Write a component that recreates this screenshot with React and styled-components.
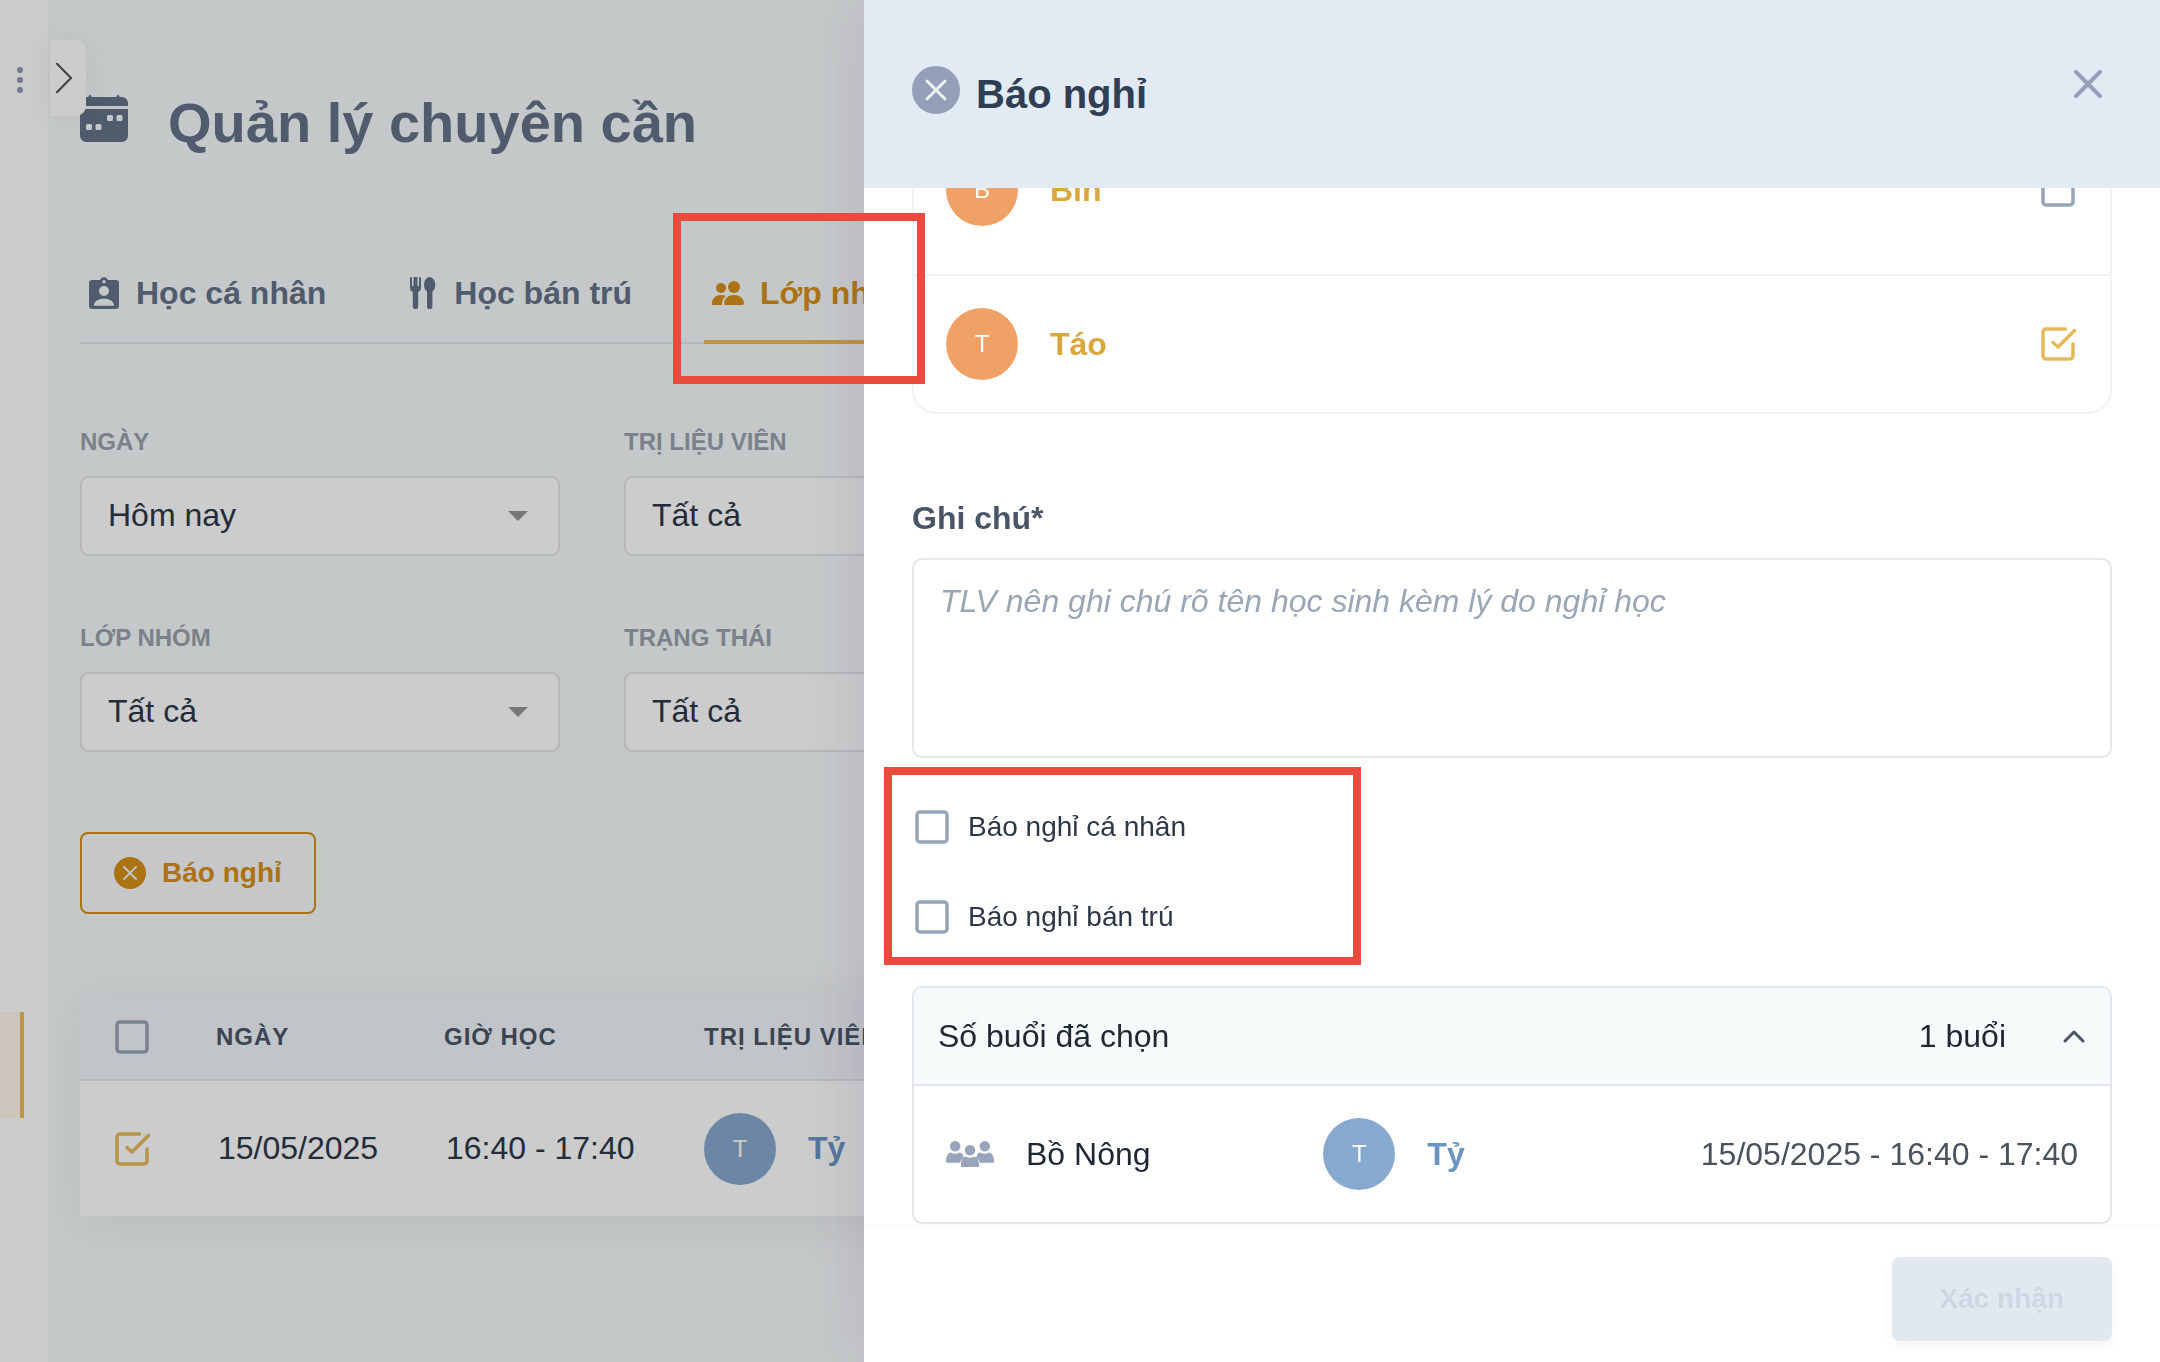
import React from "react";
import styled, { createGlobalStyle } from "styled-components";

const filters = [
  { id: "ngay", label: "NGÀY", value: "Hôm nay" },
  { id: "tri-lieu-vien", label: "TRỊ LIỆU VIÊN", value: "Tất cả" },
  { id: "lop-nhom", label: "LỚP NHÓM", value: "Tất cả" },
  { id: "trang-thai", label: "TRẠNG THÁI", value: "Tất cả" },
];

const students = [
  { name: "Bin", checked: false },
  { name: "Táo", checked: true },
];

function Checkbox({ checked, ...props }) {
  return (
    <CheckWrap>
      <input type="checkbox" defaultChecked={checked} {...props} />
      <svg viewBox="0 0 40 40" aria-hidden="true">
        <rect className="off" x="5" y="5" width="30" height="30" rx="3" />
        <g className="on">
          <path d="M27.5 5H8a3 3 0 0 0-3 3v24a3 3 0 0 0 3 3h24a3 3 0 0 0 3-3V20" />
          <path d="M15 18.5l5 4.5L36.5 6.5" />
        </g>
      </svg>
    </CheckWrap>
  );
}

function CrossCircle({ size }) {
  return (
    <svg width={size} height={size} viewBox="0 0 48 48" aria-hidden="true">
      <circle cx="24" cy="24" r="24" fill="currentColor" />
      <path
        d="M15 15l18 18M33 15L15 33"
        stroke="#edf2f7"
        strokeWidth="3"
        strokeLinecap="round"
      />
    </svg>
  );
}

function CalendarIcon() {
  return (
    <svg width="48" height="48" viewBox="0 0 48 48" aria-hidden="true">
      <path
        fill="currentColor"
        fillRule="evenodd"
        d="M10 0a1.5 1.5 0 0 1 1.500 1.500V2h25v-.5a1.500 1.500 0 0 1 3 0V2H42a6 6 0 0 1 6 6v3H0V8a6 6 0 0 1 6-6h2.500v-.5A1.500 1.500 0 0 1 10 0zM0 14h48v27a6 6 0 0 1-6 6H6a6 6 0 0 1-6-6zM28.500 20a1.500 1.500 0 0 0-1.500 1.500v3a1.500 1.500 0 0 0 1.500 1.500h3a1.500 1.500 0 0 0 1.500-1.500v-3a1.500 1.500 0 0 0-1.500-1.500zM38 20a1.500 1.500 0 0 0-1.500 1.500v3a1.500 1.500 0 0 0 1.500 1.500h3a1.500 1.500 0 0 0 1.500-1.500v-3A1.500 1.500 0 0 0 41 20zM7.500 29A1.500 1.500 0 0 0 6 30.500v3A1.500 1.500 0 0 0 7.500 35h3a1.500 1.500 0 0 0 1.500-1.500v-3a1.500 1.500 0 0 0-1.500-1.500zM17 29a1.500 1.500 0 0 0-1.500 1.500v3A1.500 1.500 0 0 0 17 35h3a1.500 1.500 0 0 0 1.500-1.500v-3A1.500 1.500 0 0 0 20 29z"
      />
    </svg>
  );
}

function BadgeIcon() {
  return (
    <svg width="32" height="32" viewBox="-1 0 32 32" fill="currentColor" aria-hidden="true">
      <path
        fillRule="evenodd"
        d="M3 3h8.200a4 4 0 0 1 7.600 0H27a3 3 0 0 1 3 3v23a3 3 0 0 1-3 3H3a3 3 0 0 1-3-3V6a3 3 0 0 1 3-3zM15 3a1.700 1.700 0 1 0 0 3.400A1.700 1.700 0 0 0 15 3zM15 9a5 5 0 1 0 0 10 5 5 0 0 0 0-10zM5 28.700h20c0-4.500-4.500-7-10-7s-10 2.500-10 7z"
      />
    </svg>
  );
}

function CutleryIcon() {
  return (
    <svg width="32" height="32" viewBox="-4 0 32 32" fill="currentColor" aria-hidden="true">
      <path d="M0 1a1 1 0 0 1 2 0v8h1.500V1a1 1 0 0 1 1.200-1h1.600a1 1 0 0 1 1.200 1v8H9V1a1 1 0 0 1 2 0v10c0 2-1 3.200-2.800 3.800V29.500a2.700 2.700 0 0 1-5.400 0V14.800C1 14.200 0 13 0 11z" />
      <path d="M19.700 0c3.200 0 5.600 3.800 5.600 8 0 3.200-1.200 5.500-2.900 6.500v15a2.700 2.700 0 0 1-5.400 0v-15c-1.700-1-2.900-3.300-2.900-6.500 0-4.200 2.400-8 5.600-8z" />
      <path d="M4.700 0h1.600v9H4.700z" />
    </svg>
  );
}

function PeopleIcon() {
  return (
    <svg width="32" height="24" viewBox="0 0 32 24" fill="currentColor" aria-hidden="true">
      <circle cx="9" cy="7" r="5" />
      <circle cx="22" cy="6" r="6" />
      <path d="M0 22.500C0 17 4 14 9 14c1.800 0 3.400.3 4.800.9-2.600 2-4 4.800-3.800 9.100H1.300A1.300 1.300 0 0 1 0 22.500z" />
      <path d="M12.300 22.500c0-5.500 4.300-8.500 9.800-8.500s9.900 3 9.900 8.500a1.400 1.400 0 0 1-1.400 1.500H13.700a1.400 1.400 0 0 1-1.400-1.500z" />
    </svg>
  );
}

function GroupIcon() {
  return (
    <svg width="48" height="26" viewBox="0 0 48 26" fill="#98a4ba" aria-hidden="true">
      <circle cx="9.200" cy="5.300" r="5.200" />
      <circle cx="38.800" cy="5.300" r="5.200" />
      <circle cx="24" cy="9.300" r="5.200" />
      <path d="M5 11.500c2.500 1.700 6 1.700 8.500 0 1.500.3 2.600 1 3.300 2 .2 1.300.6 2.300 1.200 3.200-2 .9-3.300 2.600-3.800 5H.8c-.6 0-.8-.3-.8-.8C0 15.500 1.500 12.300 5 11.500z" />
      <path d="M43 11.500c-2.500 1.700-6 1.700-8.500 0-1.500.3-2.600 1-3.300 2-.2 1.300-.6 2.300-1.200 3.200 2 .9 3.300 2.600 3.800 5h13.400c.6 0 .8-.3.800-.8 0-5.400-1.500-8.600-5-9.400z" />
      <path d="M19.800 15.500c2.500 1.700 5.900 1.700 8.400 0 3.500.8 4.900 4.200 4.900 9.600 0 .6-.3.900-.9.900H15.800c-.6 0-.9-.3-.9-.9 0-5.400 1.400-8.800 4.900-9.600z" />
    </svg>
  );
}

export default function App() {
  return (
    <>
      <GlobalStyle />
      <Page>
        <Rail>
          <MoreButton aria-label="Thêm">
            <svg width="8" height="28" viewBox="0 0 8 28" fill="#8e9aad">
              <circle cx="4" cy="4" r="3" />
              <circle cx="4" cy="14" r="3" />
              <circle cx="4" cy="24" r="3" />
            </svg>
          </MoreButton>
          <ActiveLink href="#chuyen-can" aria-label="Quản lý chuyên cần" />
        </Rail>
        <Main>
          <Expand aria-label="Mở menu">
            <svg width="18" height="40" viewBox="0 0 18 40" fill="none">
              <path
                d="M2 1l14 19L2 39"
                stroke="#555"
                strokeWidth="2.5"
                strokeLinecap="round"
                strokeLinejoin="round"
                transform="translate(0 5) scale(1 .75)"
              />
            </svg>
          </Expand>

          <PageTitle>
            <CalendarIcon />
            <h1>Quản lý chuyên cần</h1>
          </PageTitle>

          <Tabs>
            <Tab href="#ca-nhan">
              <BadgeIcon />
              Học cá nhân
            </Tab>
            <Tab href="#ban-tru">
              <CutleryIcon />
              Học bán trú
            </Tab>
            <Tab href="#lop-nhom-tab" $active>
              <PeopleIcon />
              Lớp nhóm
              <TabMarker />
            </Tab>
          </Tabs>

          <Filters>
            {filters.map((x) => (
              <Field key={x.id}>
                <label htmlFor={x.id}>{x.label}</label>
                <div className="control">
                  <select id={x.id}>
                    <option>{x.value}</option>
                  </select>
                  <span className="arrow" />
                </div>
              </Field>
            ))}
          </Filters>

          <OutlineButton>
            <CrossCircle size={32} />
            Báo nghỉ
          </OutlineButton>

          <Table>
            <thead>
              <tr>
                <th className="check">
                  <Checkbox aria-label="Chọn tất cả" />
                </th>
                <th className="date">NGÀY</th>
                <th className="time">GIỜ HỌC</th>
                <th>TRỊ LIỆU VIÊN</th>
              </tr>
            </thead>
            <tbody>
              <tr>
                <td>
                  <Checkbox checked aria-label="Chọn buổi 15/05/2025" />
                </td>
                <td className="value">15/05/2025</td>
                <td className="value">16:40 - 17:40</td>
                <td>
                  <Person $color="#6a94c1">
                    <Avatar $bg="#87a8cf">T</Avatar>
                    Tỷ
                  </Person>
                </td>
              </tr>
            </tbody>
          </Table>
        </Main>
      </Page>

      <Backdrop />

      <Drawer>
        <DrawerHeader>
          <CrossCircle size={48} />
          <h2>Báo nghỉ</h2>
          <CloseButton aria-label="Đóng">
            <svg width="36" height="36" viewBox="0 0 36 36" fill="none">
              <path
                d="M6 6l24 24M30 6L6 30"
                stroke="#93a0b8"
                strokeWidth="4"
                strokeLinecap="round"
              />
            </svg>
          </CloseButton>
        </DrawerHeader>

        <DrawerBody>
          <div>
            <StudentList>
              {students.map((x) => (
                <li key={x.name}>
                  <Person $color="#d9a73c">
                    <Avatar $bg="#f0a266">{x.name[0]}</Avatar>
                    {x.name}
                  </Person>
                  <Checkbox checked={x.checked} aria-label={x.name} />
                </li>
              ))}
            </StudentList>

            <Note>
              <label htmlFor="ghi-chu">Ghi chú*</label>
              <textarea
                id="ghi-chu"
                placeholder="TLV nên ghi chú rõ tên học sinh kèm lý do nghỉ học"
              />
            </Note>

            <Options>
              <label>
                <Checkbox />
                Báo nghỉ cá nhân
              </label>
              <label>
                <Checkbox />
                Báo nghỉ bán trú
              </label>
              <OptionsMarker />
            </Options>

            <Sessions>
              <SessionsToggle aria-expanded="true">
                <span>Số buổi đã chọn</span>
                <span className="count">1 buổi</span>
                <svg width="24" height="16" viewBox="0 0 24 16" fill="none">
                  <path
                    d="M3 13l9-9 9 9"
                    stroke="#4a5568"
                    strokeWidth="3"
                    strokeLinecap="round"
                    strokeLinejoin="round"
                  />
                </svg>
              </SessionsToggle>
              <SessionRow>
                <div className="group">
                  <GroupIcon />
                  Bồ Nông
                </div>
                <Person $color="#6a94c1">
                  <Avatar $bg="#87a8cf">T</Avatar>
                  Tỷ
                </Person>
                <time>15/05/2025 - 16:40 - 17:40</time>
              </SessionRow>
            </Sessions>
          </div>
        </DrawerBody>

        <DrawerFooter>
          <button disabled>Xác nhận</button>
        </DrawerFooter>
      </Drawer>
    </>
  );
}

const GlobalStyle = createGlobalStyle`
  * {
    box-sizing: border-box;
  }
  body {
    margin: 0;
    overflow-x: hidden;
    font-family: "Liberation Sans", Arial, Helvetica, sans-serif;
    font-size: 32px;
    color: #2d3748;
    background: #f7fbfb;
  }
  h1, h2, ul {
    margin: 0;
    padding: 0;
  }
  button, select, textarea {
    font: inherit;
    color: inherit;
  }
  button {
    cursor: pointer;
  }
  svg {
    display: block;
    flex: none;
  }
`;

const Page = styled.div`
  display: flex;
  min-height: 100vh;
`;

const Rail = styled.nav`
  display: flex;
  flex-direction: column;
  gap: 912px;
  width: 48px;
  flex: none;
  padding-top: 60px;
  background: #fff;
`;

const MoreButton = styled.button`
  display: grid;
  place-items: center;
  width: 40px;
  height: 40px;
  padding: 0;
  border: 0;
  background: none;
`;

const ActiveLink = styled.a`
  width: 24px;
  height: 106px;
  background: #fff7ee;
  border-right: 4px solid #ecb956;
`;

const Main = styled.main`
  position: relative;
  flex: 1;
  padding: 95px 48px 48px 32px;
`;

const Expand = styled.button`
  position: absolute;
  top: 40px;
  left: 2px;
  width: 36px;
  height: 76px;
  display: grid;
  place-items: center;
  padding: 0 8px 0 0;
  border: 0;
  border-radius: 0 10px 10px 0;
  background: #fff;
  box-shadow: 0 0 32px rgba(45, 75, 75, 0.08);
`;

const PageTitle = styled.div`
  display: flex;
  align-items: flex-start;
  gap: 40px;
  color: #64728a;
  h1 {
    font-size: 56px;
    line-height: 56px;
  }
`;

const Tabs = styled.nav`
  display: flex;
  gap: 64px;
  margin: 95px 0 80px;
  box-shadow: inset 0 -2px 0 #e2e5ea;
`;

const Tab = styled.a`
  position: relative;
  display: flex;
  align-items: center;
  gap: 16px;
  height: 98px;
  padding: 0 8px;
  font-weight: bold;
  text-decoration: none;
  white-space: nowrap;
  color: ${(p) => (p.$active ? "#d69018" : "#64728a")};
  border-bottom: 4px solid ${(p) => (p.$active ? "#ecb956" : "transparent")};
`;

const Marker = styled.span`
  position: absolute;
  z-index: 5;
  border: 8px solid #e94c3d;
  pointer-events: none;
`;

const TabMarker = styled(Marker)`
  top: -33px;
  left: -31px;
  width: 252px;
  height: 171px;
`;

const Filters = styled.div`
  display: grid;
  grid-template-columns: 480px 480px;
  gap: 64px;
`;

const Field = styled.div`
  display: flex;
  flex-direction: column;
  gap: 16px;
  label {
    font-size: 24px;
    line-height: 36px;
    font-weight: bold;
    color: #9aa2ae;
  }
  .control {
    display: grid;
    align-items: center;
  }
  .control > * {
    grid-area: 1 / 1;
  }
  select {
    appearance: none;
    width: 100%;
    height: 80px;
    padding: 0 26px 2px;
    border: 2px solid #e2e5e8;
    border-radius: 8px;
    background: #fff;
  }
  .arrow {
    justify-self: end;
    margin-right: 32px;
    border: 10px solid transparent;
    border-top-color: #959595;
    border-bottom: 0;
    pointer-events: none;
  }
`;

const OutlineButton = styled.button`
  display: flex;
  align-items: center;
  gap: 16px;
  height: 82px;
  margin: 80px 0;
  padding: 0 32px;
  border: 2px solid #d69018;
  border-radius: 8px;
  background: #f8f9fc;
  font-size: 28px;
  font-weight: bold;
  color: #d69018;
`;

const Table = styled.table`
  width: 100%;
  table-layout: fixed;
  border-collapse: collapse;
  background: #fff;
  box-shadow: 0 8px 40px rgba(45, 60, 75, 0.08);
  th,
  td {
    padding: 0 0 0 32px;
    text-align: left;
  }
  th {
    height: 86px;
    font-size: 24px;
    letter-spacing: 1px;
    color: #4a5568;
    background: #f2f5fa;
    border-bottom: 2px solid #e2e5ea;
  }
  td {
    height: 136px;
  }
  .check {
    width: 104px;
  }
  .date {
    width: 228px;
  }
  .time {
    width: 260px;
  }
  .value {
    padding-left: 34px;
  }
`;

const CheckWrap = styled.span`
  display: grid;
  width: 40px;
  height: 40px;
  > * {
    grid-area: 1 / 1;
  }
  input {
    appearance: none;
    width: 40px;
    height: 40px;
    margin: 0;
  }
  svg {
    fill: none;
    stroke-width: 3.5;
    stroke-linecap: round;
    stroke-linejoin: round;
    pointer-events: none;
  }
  .off {
    stroke: #98a4b8;
  }
  .on {
    stroke: #e5b95a;
    visibility: hidden;
  }
  input:checked + svg .on {
    visibility: visible;
  }
  input:checked + svg .off {
    visibility: hidden;
  }
`;

const Person = styled.div`
  display: flex;
  align-items: center;
  gap: 32px;
  font-weight: bold;
  color: ${(p) => p.$color};
`;

const Avatar = styled.span`
  display: grid;
  place-items: center;
  width: 72px;
  height: 72px;
  border-radius: 50%;
  font-size: 24px;
  font-weight: normal;
  color: #fff;
  background: ${(p) => p.$bg};
`;

const Backdrop = styled.div`
  position: fixed;
  inset: 0;
  z-index: 2;
  background: rgba(0, 0, 0, 0.2);
`;

const Drawer = styled.aside`
  position: fixed;
  inset: 0 0 0 auto;
  z-index: 3;
  display: flex;
  flex-direction: column;
  width: 60%;
  background: #fff;
  box-shadow: 0 0 64px rgba(60, 40, 90, 0.14);
`;

const DrawerHeader = styled.header`
  display: flex;
  align-items: flex-start;
  gap: 16px;
  padding: 66px 54px 66px 48px;
  color: #93a0b8;
  background: #e2eaf4;
  h2 {
    flex: 1;
    font-size: 40px;
    line-height: 56px;
    color: #2f3e52;
  }
`;

const CloseButton = styled.button`
  padding: 0;
  border: 0;
  background: none;
`;

/* column-reverse keeps the panel scrolled to its end */
const DrawerBody = styled.div`
  display: flex;
  flex-direction: column-reverse;
  flex: 1;
  min-height: 0;
  padding: 0 48px;
  overflow-y: auto;
  scrollbar-width: none;
`;

const StudentList = styled.ul`
  list-style: none;
  border: 2px solid #eff3f7;
  border-radius: 24px;
  li {
    display: flex;
    align-items: center;
    justify-content: space-between;
    padding: 32px;
  }
  li + li {
    border-top: 2px solid #eff3f7;
  }
  li:not(:last-child) {
    padding-bottom: 48px;
  }
`;

const Note = styled.div`
  display: flex;
  flex-direction: column;
  gap: 16px;
  margin-top: 80px;
  label {
    line-height: 48px;
    font-weight: bold;
    color: #4a5568;
  }
  textarea {
    height: 200px;
    padding: 17px 26px;
    border: 2px solid #e4e7ea;
    border-radius: 10px;
    line-height: 48px;
    resize: none;
  }
  textarea::placeholder {
    font-style: italic;
    color: #9aa6b6;
  }
`;

const Options = styled.div`
  position: relative;
  display: flex;
  flex-direction: column;
  align-items: flex-start;
  gap: 50px;
  margin: 49px 0;
  label {
    display: flex;
    align-items: center;
    gap: 16px;
    font-size: 28px;
  }
`;

const OptionsMarker = styled(Marker)`
  top: -40px;
  left: -28px;
  width: 477px;
  height: 198px;
`;

const Sessions = styled.section`
  border: 2px solid #e2e6ea;
  border-radius: 10px;
  overflow: hidden;
  color: #1f2733;
`;

const SessionsToggle = styled.button`
  display: flex;
  align-items: center;
  width: 100%;
  height: 98px;
  padding: 0 24px;
  border: 0;
  border-bottom: 2px solid #e2e8ec;
  background: #f6fafb;
  .count {
    margin: 0 56px 0 auto;
  }
`;

const SessionRow = styled.div`
  display: grid;
  grid-template-columns: repeat(3, 1fr);
  align-items: center;
  height: 136px;
  padding: 0 32px;
  .group {
    display: flex;
    align-items: center;
    gap: 32px;
  }
  time {
    text-align: right;
    color: #4a525e;
  }
`;

const DrawerFooter = styled.footer`
  display: flex;
  justify-content: flex-end;
  padding: 31px 48px 21px;
  border-top: 2px solid #fbfbf7;
  button {
    height: 84px;
    padding: 0 48px;
    border: 0;
    border-radius: 8px;
    font-size: 28px;
    font-weight: bold;
    color: #cdd7e3;
    background: #e2e8f0;
    box-shadow: 0 4px 12px rgba(45, 55, 72, 0.06);
  }
`;
